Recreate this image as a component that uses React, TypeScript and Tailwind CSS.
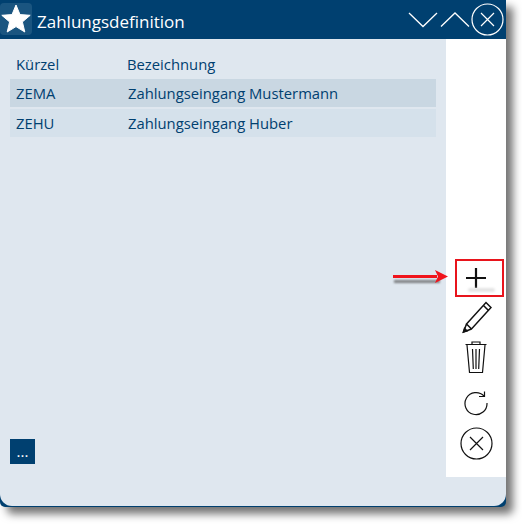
const rows = [
  { id: 1, code: "ZEMA", name: "Zahlungseingang Mustermann", bg: "bg-[#c9d7e2]" },
  { id: 2, code: "ZEHU", name: "Zahlungseingang Huber", bg: "bg-[#d5e1eb]" },
];

const App = () => {
  return (
    <div className="relative w-[522px] h-[524px] bg-white overflow-hidden font-['Open_Sans',sans-serif]">
      <div className="w-[506px] h-[507px] flex flex-col pb-[1px] bg-[#004070] rounded-bl-[5px] rounded-br-[5px] shadow-[7px_7px_8px_rgba(0,0,0,0.55)]">
        <div className="h-[39px] flex items-center shrink-0 text-white">
          <div className="mt-[-1px] w-[32px] h-[32px] bg-[#1a5580] rounded-[4px] flex items-center justify-center">
            <svg width="30" height="30" viewBox="0 0 30 30">
              <path
                d="M15 1 L19 10.6 L29.2 11.3 L21.4 17.9 L23.8 28 L15 22.6 L6.2 28 L8.6 17.9 L0.8 11.3 L11 10.6 Z"
                fill="#fff"
                stroke="#fff"
                strokeWidth="1"
                strokeLinejoin="round"
              />
            </svg>
          </div>
          <h2 className="ml-[5px] mt-[3px] text-[17px] font-normal leading-none">Zahlungsdefinition</h2>
          <div className="ml-auto mr-[2px] flex items-center">
            <svg width="30" height="20" viewBox="0 0 30 20" fill="none" stroke="#fff" strokeWidth="1.3">
              <path d="M1 3 L15 16.5 L29 3" />
            </svg>
            <svg width="30" height="20" viewBox="0 0 30 20" fill="none" stroke="#fff" strokeWidth="1.3" className="ml-[2px]">
              <path d="M1 16.5 L15 3 L29 16.5" />
            </svg>
            <svg width="33" height="33" viewBox="0 0 33 33" fill="none" stroke="#fff" strokeWidth="1.2" className="ml-[1px]">
              <circle cx="16.5" cy="16.5" r="15.5" />
              <path d="M10 10 L23 23 M23 10 L10 23" />
            </svg>
          </div>
        </div>

        <div className="flex-1 bg-[#dfe7ef] rounded-bl-[12px] rounded-br-[12px] flex items-start text-[#004070]">
          <div className="flex-1 h-[438px] px-[10px] flex flex-col">
            <div className="flex h-[40px] items-end pb-[5px] text-[14.8px] leading-[20px]">
              <span className="w-[117px] pl-[6px]">Kürzel</span>
              <span>Bezeichnung</span>
            </div>
            {rows.map((row) => (
              <div key={row.id} className={`flex h-[28px] items-center mb-[2px] text-[14.8px] ${row.bg}`}>
                <span className="w-[117px] pl-[6px]">{row.code}</span>
                <span className="pl-[1px]">{row.name}</span>
              </div>
            ))}
            <div className="mt-auto mb-[13px] w-[25px] h-[25px] bg-[#004070] text-white text-[15px] flex items-center justify-center leading-none">
              ...
            </div>
          </div>

          <div className="w-[60px] h-[438px] bg-white flex flex-col items-center justify-end pb-[17px]">
            <div className="w-[48px] h-[37px] flex items-center justify-center">
              <svg width="24" height="24" viewBox="0 0 24 24" fill="none" stroke="#111" strokeWidth="2.2">
                <path d="M12 2 V22 M2 12 H22" />
              </svg>
            </div>
            <svg width="32" height="34" viewBox="0 0 32 34" fill="none" stroke="#111" strokeWidth="1.5" className="mt-[4px]">
              <path d="M6.5 24 L26 2.5 L31 7.5 L11.5 29 Z M6.5 24 L3.5 32 L11.5 29 M23.5 5.5 L28.5 10.5" />
              <path d="M3.5 32 L4.5 28.5 L7 31 Z" fill="#111" />
            </svg>
            <svg width="24" height="34" viewBox="0 0 24 34" fill="none" stroke="#111" strokeWidth="1.2" className="mt-[6px]">
              <path d="M1.5 4.5 H22.5 M8 4.5 V2 H16 V4.5 M3 5 L5.5 32.5 H18.5 L21 5 M8.5 9 L9.3 29 M12 9 V29 M15.5 9 L14.7 29" />
            </svg>
            <svg width="26" height="26" viewBox="0 0 26 26" fill="none" stroke="#111" strokeWidth="1.2" className="mt-[16px]">
              <path d="M21 6 A11 11 0 1 0 24 13 M21.5 1.5 V6.5 H16" />
            </svg>
            <svg width="33" height="33" viewBox="0 0 33 33" fill="none" stroke="#111" strokeWidth="1.2" className="mt-[11px]">
              <circle cx="16.5" cy="16.5" r="15.5" />
              <path d="M10 10 L23 23 M23 10 L10 23" />
            </svg>
          </div>
        </div>
      </div>

      {/* annotation */}
      <div className="absolute left-[455px] top-[259px] w-[49px] h-[38px] border-[2px] border-[#e8141c]" />
      <svg width="62" height="24" viewBox="0 0 62 24" className="absolute left-[391px] top-[267px] overflow-visible">
        <rect x="3" y="13" width="46" height="3" fill="#555" opacity="0.7" className="blur-[1px]" />
        <path d="M2 8 H46 V11 H2 Z M44 3 L57 9.5 L44 16 L47 9.5 Z" fill="#f0141c" />
      </svg>
      <div className="absolute left-[468px] top-[288px] w-[27px] h-[4px] rounded-full bg-[#e4e4e4] blur-[1px]" />
    </div>
  );
};

export default App;
